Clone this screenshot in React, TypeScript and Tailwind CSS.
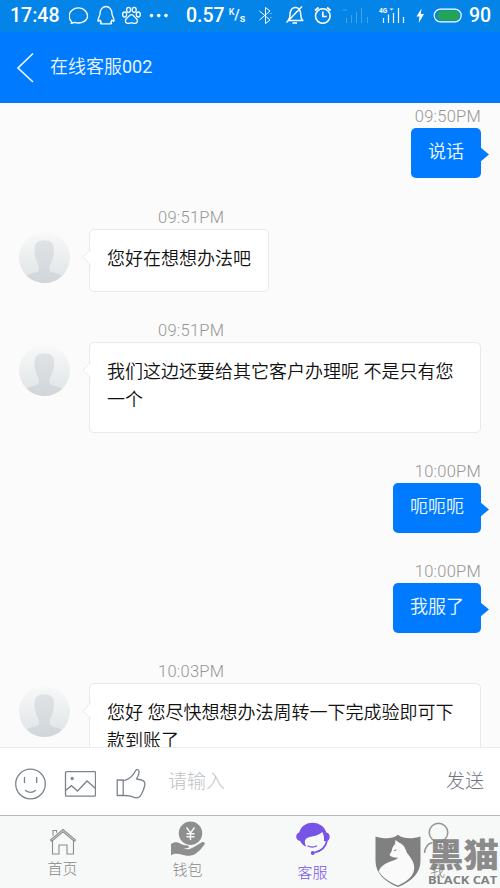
import React from "react";

const ROBOTO = "font-['Roboto','Noto_Sans_CJK_SC',sans-serif]";

function StatusBar() {
  return (
    <div className="flex h-8 shrink-0 items-center bg-[#0584e8] pl-[10px] text-white">
      <span className="w-[59px] text-[19.5px] font-medium leading-8">17:48</span>
      <svg className="h-8 w-[100px] shrink-0" viewBox="69 0 100 32" fill="none" stroke="#fff" strokeWidth="1.3" strokeLinecap="round" strokeLinejoin="round">
        <path d="M72 22.5c-4-4-3.500-9.500 0-12.200 4-3.300 10-3 13 .2 4 4 3 9-1.200 11.200-3 1.600-6.300 1.500-8.800.7l-3.800 1z" />
        <path d="M100 14c0-10 12-10 12 0 0 1.500 1.500 3 2 6 .3 2-1 1.500-2 0-.3 1-.8 1.700-1.300 2.200 1.500.8 1 1.700-1 1.700h-7.400c-2 0-2.500-.9-1-1.700-.5-.5-1-1.200-1.300-2.200-1 1.500-2.300 2-2 0 .5-3 2-4.500 2-6z" />
        <ellipse cx="124.600" cy="14.500" rx="2" ry="2.500" />
        <ellipse cx="128.600" cy="9.800" rx="2" ry="2.500" />
        <ellipse cx="134.200" cy="9.800" rx="2" ry="2.500" />
        <ellipse cx="138.300" cy="14.500" rx="2" ry="2.500" />
        <path d="M131.400 14.600c-2 0-2.500 2-4.500 3.500-2.800 2-1.500 5.400 1 5.300 1.500 0 2-.5 3.500-.5s2 .5 3.500.5c2.500.1 3.800-3.300 1-5.300-2-1.500-2.500-3.500-4.500-3.500z" />
        <g fill="#fff" stroke="none">
          <circle cx="151.500" cy="15.600" r="1.800" />
          <circle cx="158.700" cy="15.600" r="1.800" />
          <circle cx="166" cy="15.600" r="1.800" />
        </g>
      </svg>
      <div className="ml-[17px] flex w-[72px] items-center">
        <span className="text-[19.5px] font-medium leading-8">0.57</span>
        <span className="ml-[4px] flex font-medium leading-none">
          <span className="text-[9px]">K</span>
          <span className="text-[14px]">/</span>
          <span className="pt-[5px] text-[11px]">s</span>
        </span>
      </div>
      <svg className="h-8 w-[210px] shrink-0" viewBox="258 0 210 32" fill="none" stroke="#fff" strokeLinejoin="round">
        <path d="M259.500 11l10.500 9-4.500 3.500V7.500l4.500 3.500-10.500 9" strokeWidth="1" />
        <path d="M270.500 13.500h.8M270.500 17.500h.8" strokeWidth="1.200" />
        <path d="M288 20.500c2.500-2 1.700-5 2.200-8 .8-3.800 3.500-5 5.300-5s4.500 1.500 5 5c.5 3-.2 6 2.300 8zM292.500 23h4.500M286.500 22.500L302 6.500" strokeWidth="1.500" />
        <circle cx="322.800" cy="16" r="7.300" strokeWidth="1.600" />
        <path d="M322.800 11.500v5h4M315 10.500l3.500-3M330.600 10.500l-3.500-3" strokeWidth="1.700" />
        <g strokeWidth="1" opacity=".25">
          <path d="M346.500 18v5M351.500 15v8M356.500 12v11M361.500 8v15M367.500 17v6M343 10h4" />
        </g>
        <path d="M383.500 18v5M388.500 14.500v8.500M393.500 13v10M398.500 8v15M403.500 17v6" strokeWidth="1.200" />
        <path d="M389.500 8.500h4l-2 2z" fill="#fff" stroke="none" />
        <text x="379" y="12.500" fill="#fff" stroke="none" fontSize="6.500" fontWeight="700" fontFamily="Roboto">4G</text>
        <path d="M421.500 8.500l-5 8h3l-.8 6.500 5.300-9h-3.200z" fill="#fff" stroke="none" />
        <rect x="434.200" y="9.200" width="27" height="12.600" rx="6.300" strokeWidth="1.200" />
        <rect x="437.500" y="10.500" width="22" height="10" rx="5" fill="#22a455" stroke="none" />
      </svg>
      <span className="ml-px text-[19.500px] font-medium leading-8">90</span>
    </div>
  );
}

function Header() {
  return (
    <header className="flex h-[71px] shrink-0 items-center bg-[#007bff] pl-4 text-[#e9f5ff]">
      <svg className="h-[31px] w-[19px]" viewBox="0 0 19 31" fill="none" stroke="currentColor" strokeWidth="1.700">
        <path d="M17 1.500L2 16l15 14" />
      </svg>
      <h1 className="ml-[15px] pb-[1px] text-[18px] font-[350] leading-7">
        在线客服<span className="font-normal">002</span>
      </h1>
    </header>
  );
}

function Avatar({ id }: { id: string }) {
  return (
    <svg className="mt-[3px] ml-[19px] h-[51px] w-[51px] shrink-0" viewBox="0 0 50 50">
      <defs>
        <linearGradient id={`${id}-bg`} x1="0" y1="0" x2="0" y2="1">
          <stop offset="0" stopColor="#f8f9f9" />
          <stop offset="1" stopColor="#dfe3e5" />
        </linearGradient>
        <linearGradient id={`${id}-fg`} x1="0" y1="0" x2="0" y2="1">
          <stop offset="0" stopColor="#dfe3e6" />
          <stop offset="1" stopColor="#d0d5d9" />
        </linearGradient>
        <clipPath id={`${id}-clip`}><circle cx="25" cy="25" r="25" /></clipPath>
      </defs>
      <circle cx="25" cy="25" r="25" fill={`url(#${id}-bg)`} />
      <path clipPath={`url(#${id}-clip)`} fill={`url(#${id}-fg)`} d="M25 8c6.500 0 9.500 3 9.300 9 0 2-.1 3-.3 5-.3 2.500-.8 3.500-1.300 5-.5 2.500-1.500 4.300-2.700 6v4c0 2 3 2.700 6 3.500 3 .7 5 1.500 6.500 3V52H7v-8.500c1.500-1.500 3.500-2.300 6.500-3 3-.8 6-1.500 6-3.500v-4c-1.200-1.700-2.200-3.500-2.700-6-.5-1.500-1-2.500-1.300-5-.2-2-.3-3-.3-5C15.200 11 18.500 8 25 8z" />
    </svg>
  );
}

const TIME = "block h-[25px] text-[16.5px] font-light leading-[27px] tracking-[0.25px] text-[#969696]";

function Incoming({ id, time, children, size }: { id: string; time: string; children: React.ReactNode; size: string }) {
  return (
    <section className="shrink-0">
      <time className={`${TIME} ml-[158px]`}>{time}</time>
      <div className="flex items-start">
        <Avatar id={id} />
        <div className={`relative ml-[19px] rounded-[5px] border border-[#e9e9e9] bg-white px-[17px] pt-[15px] text-[18px] font-[350] leading-[28px] text-[#111] ${size}`}>
          <svg className="absolute -left-[8px] top-[19px] h-[16px] w-[9px]" viewBox="0 0 9 16">
            <path d="M9 0L1 8l8 8" fill="#fff" stroke="#ececec" />
          </svg>
          {children}
        </div>
      </div>
    </section>
  );
}

function Outgoing({ time, text }: { time: string; text: string }) {
  return (
    <section className="flex shrink-0 flex-col items-end pr-[19px]">
      <time className={TIME}>{time}</time>
      <div className="relative h-[50px] rounded-[5px] bg-[#007bff] px-[17px] pt-[10px] text-[18px] font-[350] leading-[28px] text-[#effaff]">
        {text}
        <svg className="absolute -right-[8px] top-[19px] h-[15px] w-[9px]" viewBox="0 0 9 15">
          <path d="M0 0l9 7.500L0 15z" fill="#007bff" />
        </svg>
      </div>
    </section>
  );
}

function InputBar() {
  return (
    <div className="flex h-[68px] shrink-0 items-center border-t border-[#ededed] bg-white pl-[15px] pr-[16px]">
      <svg className="mt-[5px] h-8 w-[32px]" viewBox="0 0 32 32" fill="none" stroke="#7b838c" strokeWidth="1.300" strokeLinecap="round">
        <circle cx="15.500" cy="16" r="14.800" />
        <path d="M9.500 9.500v5M21.700 9.500v5M10.500 22.500c3 2.200 7 2.200 10 0" />
      </svg>
      <svg className="mt-[5px] ml-[17px] h-7 w-8" viewBox="0 0 32 28" fill="none" stroke="#7b838c" strokeWidth="1.300">
        <rect x="1.500" y="1.700" width="30" height="24.500" rx="1" />
        <path d="M1.500 20.500l6-4.800 6 5.300 9.500-10 8.500 7.500" />
        <circle cx="8.200" cy="8.500" r="1" />
      </svg>
      <svg className="mt-[4px] ml-[20px] h-8 w-[30px]" viewBox="0 0 30 32" fill="none" stroke="#7b838c" strokeWidth="1.300" strokeLinejoin="round">
        <path d="M1.200 12h6v15.500h-6zM7.200 13l4.500-1.800c3-1.400 6-4.700 8-8.700.8-1.500 3.300-1 3.400 1.200.1 2.500-1.300 5-2.600 7.300l5 1c3 .8 3.700 3 3.200 5.500-.7 3.800-2 6.500-3.700 9.500-1 1.800-2.500 3-5 2.800-2.500-.2-4.200-1.300-6.500-1.900-2-.5-4-.4-6.300-.4z" />
      </svg>
      <span className="ml-[22px] pt-px text-[19px] font-light leading-8 text-[#bfc2c5]">请输入</span>
      <button className="ml-auto pt-px text-[19px] font-light leading-8 text-[#6c747d]">发送</button>
    </div>
  );
}

function HomeIcon() {
  return (
    <svg className="h-[28px] w-[28px]" viewBox="0 0 28 28" fill="none" stroke="#8b8b8b" strokeWidth="1.100">
      <path d="M1.500 13L14 2.500 26.500 13l-1.200 1.200L14 4.800 2.700 14.200zM4 8.800V3.500h3.500v2.300M3.500 14v13h6.500V18h8v9h6.500V14" />
    </svg>
  );
}

function WalletIcon() {
  return (
    <svg className="h-[36px] w-[36px]" viewBox="0 0 36 36">
      <circle cx="20.500" cy="12.300" r="11.700" fill="#8e8e8e" />
      <path d="M16.500 6.500l4 5.500 4-5.500M20.500 12v7M16.500 12.700h8M16.500 15.700h8" fill="none" stroke="#f7f8f8" strokeWidth="1.400" />
      <path fill="#8e8e8e" d="M1 23c3-2.500 6.500-2.500 10 0 1.500 1 3.500 1.200 5.500 1.200 3 .1 3.300 2.600.5 3l-3.500.3c3 1.300 7 .8 10-1.300l8-4.800c2-1.200 4.200.3 3 2.100-3 4-6.500 8.500-11.500 10.500-4 1.500-8 .5-11.500-.5-4-1-7-1-10.500.8z" />
    </svg>
  );
}

function SupportIcon() {
  return (
    <svg className="h-[34px] w-[34px]" viewBox="0 0 34 34" fill="none">
      <path fill="#7654e6" d="M3.200 10.500C5 4 10.500.7 16.500.7S28.500 4 30.300 10.500c2.200.5 3.500 2.300 3.400 4.500-.1 2.300-1.400 4-3.400 4.200L27.800 19c.7-3.300 0-6.300-1.600-9-3.700 4-9.200 4-13.200 5.200-3 .9-4.500 2.500-4.200 5.300.1 1.500.7 3 1.700 4.500-3-1.500-5.300-3.500-6.300-6C1.700 18.500.2 17 .2 14.700c0-2.200 1.200-3.700 3-4.200z" />
      <path d="M31 18.500c-1 6-5 10.300-12.500 12" stroke="#7654e6" strokeWidth="1.700" />
      <circle cx="16.800" cy="31" r="2" fill="#7654e6" />
      <path d="M11.500 23.800c3 1.700 6.500 1.700 9.500 0" stroke="#7654e6" strokeWidth="1.300" />
    </svg>
  );
}

function ProfileIcon() {
  return (
    <svg className="h-[33px] w-[34px]" viewBox="0 0 34 33" fill="none" stroke="#969696" strokeWidth="1.500">
      <circle cx="17.500" cy="10.500" r="9.300" />
      <path d="M3.500 31c.5-6 3.500-9.500 8-10.500M31 31c-.5-6-3.500-9.500-8-10.500" />
    </svg>
  );
}

function Watermark() {
  return (
    <div className="absolute bottom-0 right-0 flex h-[54px] w-[125px] text-[#808080]">
      <svg className="h-[54px] w-[46px] shrink-0" viewBox="0 0 46 54">
        <path fill="currentColor" d="M.5 2.500C8 5 17 5.500 23 .8 29 5.500 38 5 45.500 2.500V27C45.500 39 36 48 23 53 10 48 .5 39 .5 27z" />
        <path fill="#fafafa" d="M3.800 37.500c1.500-5.500 7-8.500 13.200-10.500 3-1 5.500-2 6-3.500-2.500.5-6.500-.3-8-2-1-1.300 1.200-2.500 1.800-5 .4-2.500 1.400-4.800 3.200-6.200L20.500 6l3.800 2.800c5 2 6.200 6.200 7.700 10.200 4 5 7.500 9.500 7.200 15.500-.3 7-6.200 12.500-16.200 17C14.500 48.300 7.500 43.500 3.800 37.500z" />
        <path d="M19 16.700l2.500-.9" stroke="currentColor" strokeWidth="1" />
      </svg>
      <div className="ml-[7px] w-[72px]">
        <div className="h-[38px] w-[72px] origin-left scale-y-[0.93] whitespace-nowrap text-[35.5px] font-black leading-[44px] opacity-90">黑猫</div>
        <div className="w-[64px] origin-left scale-x-[1.22] whitespace-nowrap font-['Open_Sans','Liberation_Sans',sans-serif] text-[10.500px] font-bold leading-[16px]">BLACK CAT</div>
      </div>
    </div>
  );
}

function TabBar() {
  return (
    <nav className="relative grid h-[73px] shrink-0 grid-cols-4 border-t border-[#b7b9ba] bg-[#f7f8f8] text-[15px] font-light leading-5 text-[#888]">
      <div className="flex flex-col items-center pt-[11px]">
        <HomeIcon />
        <span className="mt-[4px]">首页</span>
      </div>
      <div className="flex flex-col items-center pt-[5px]">
        <WalletIcon />
        <span className="mt-[3px]">钱包</span>
      </div>
      <div className="flex flex-col items-center pt-[6px] text-[#7654e6]">
        <SupportIcon />
        <span className="mt-[7px]">客服</span>
      </div>
      <div className="flex flex-col items-center pt-[6px]">
        <ProfileIcon />
        <span className="mt-[6px]">我</span>
      </div>
      <Watermark />
    </nav>
  );
}

export default function App() {
  return (
    <div className={`flex h-[888px] w-[500px] flex-col overflow-hidden bg-[#fbfbfb] ${ROBOTO}`}>
      <StatusBar />
      <Header />
      <main className="flex h-[644px] shrink-0 flex-col gap-[25px] overflow-hidden">
        <Outgoing time="09:50PM" text="说话" />
        <div className="pt-px">
          <Incoming id="a" time="09:51PM" size="h-[63px] w-[180px]">您好在想想办法吧</Incoming>
        </div>
        <Incoming id="b" time="09:51PM" size="h-[91px] w-[392px]">我们这边还要给其它客户办理呢 不是只有您一个</Incoming>
        <Outgoing time="10:00PM" text="呃呃呃" />
        <Outgoing time="10:00PM" text="我服了" />
        <Incoming id="c" time="10:03PM" size="h-[91px] w-[392px]">您好 您尽快想想办法周转一下完成验即可下款到账了</Incoming>
      </main>
      <InputBar />
      <TabBar />
    </div>
  );
}
